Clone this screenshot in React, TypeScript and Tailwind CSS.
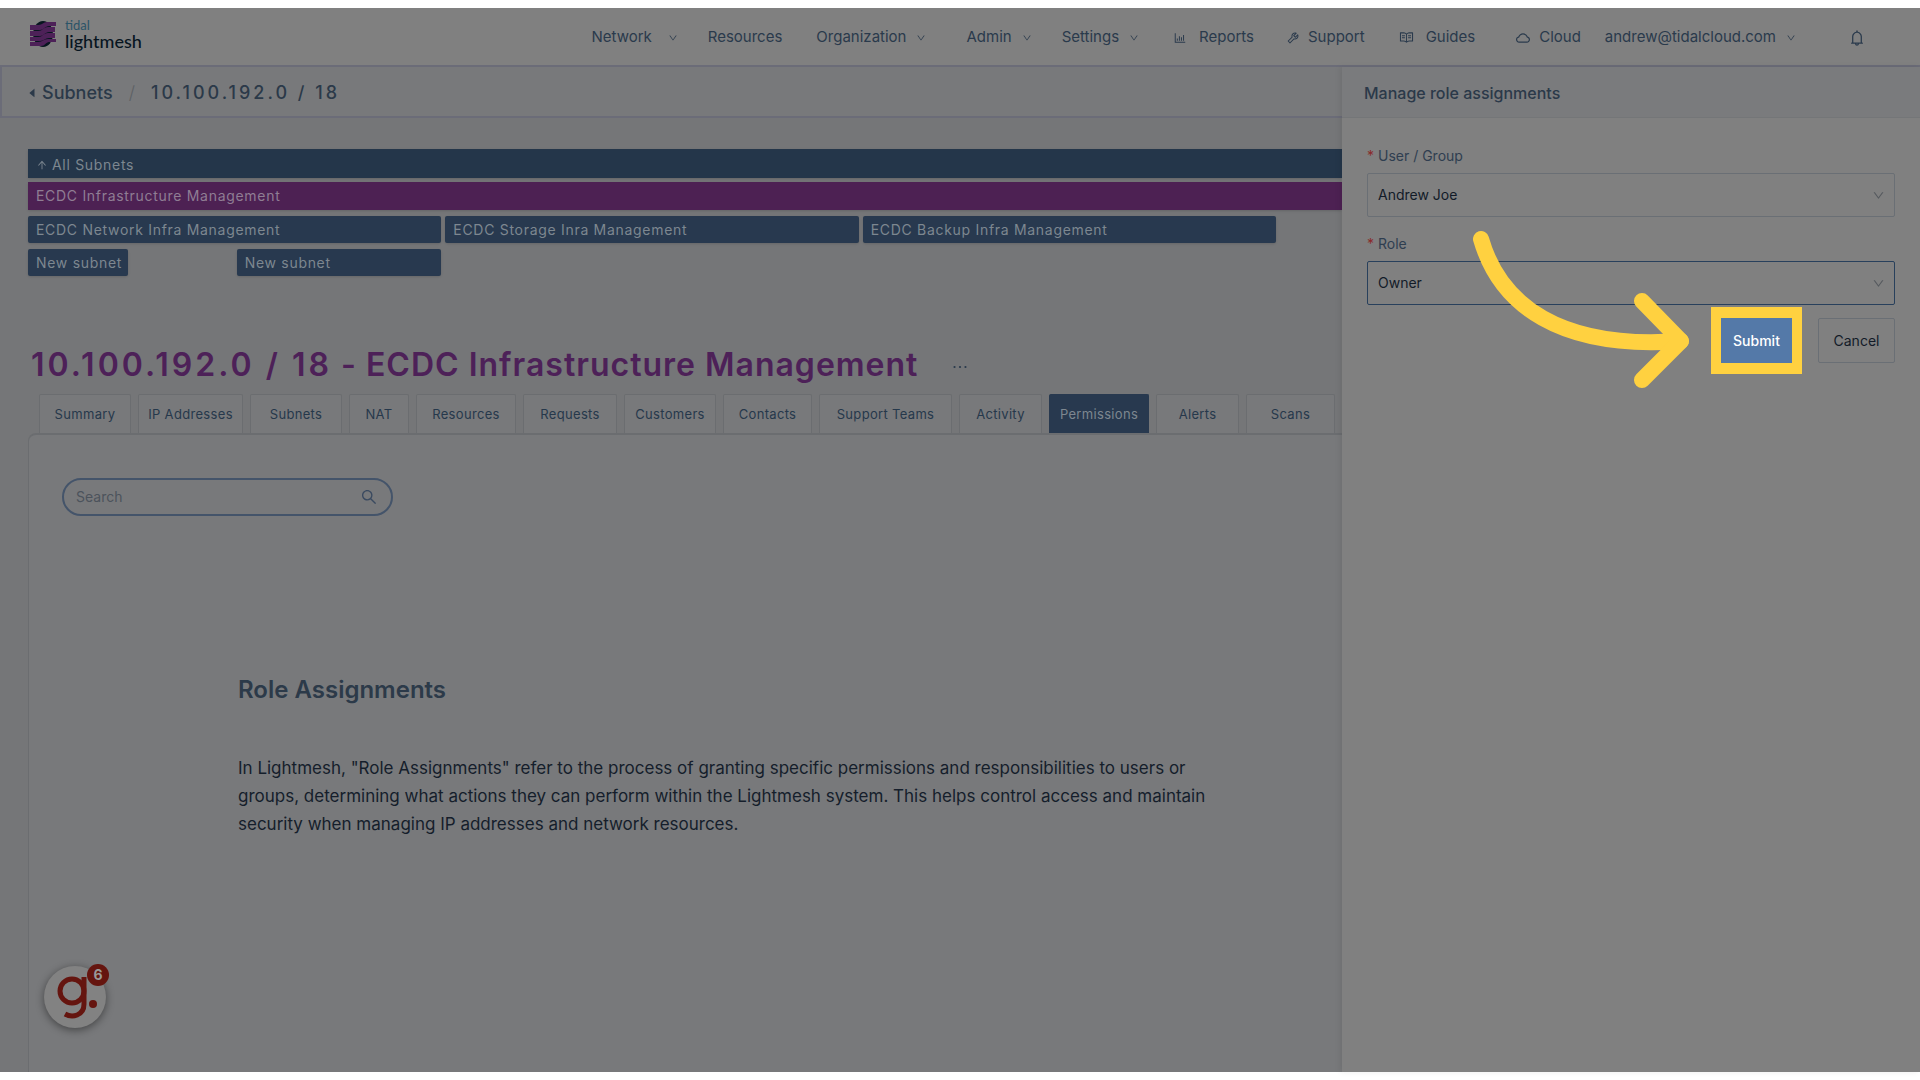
import { ReactNode } from "react";
import {
  AiFillCaretLeft,
  AiOutlineArrowUp,
  AiOutlineBarChart,
  AiOutlineBell,
  AiOutlineCloud,
  AiOutlineDown,
  AiOutlineEllipsis,
  AiOutlineRead,
  AiOutlineSearch,
  AiOutlineTool,
} from "react-icons/ai";
import clsx from "clsx";

type NavItem = {
  label: string;
  className?: string;
  icon?: ReactNode;
  arrow?: string;
};

const navItems: NavItem[] = [
  { label: "Network", arrow: "ml-4" },
  { label: "Resources", className: "ml-[30px]" },
  { label: "Organization", className: "ml-[34px]", arrow: "ml-[10px]" },
  { label: "Admin", className: "ml-10", arrow: "ml-[10px]" },
  { label: "Settings", className: "ml-[30px]", arrow: "ml-[10px]" },
  { label: "Reports", className: "ml-[34px] gap-3", icon: <AiOutlineBarChart size={14} /> },
  { label: "Support", className: "ml-8 gap-2", icon: <AiOutlineTool size={14} /> },
  { label: "Guides", className: "ml-[34px] gap-3", icon: <AiOutlineRead size={15} /> },
  { label: "Cloud", className: "ml-10 gap-2", icon: <AiOutlineCloud size={16} /> },
  { label: "andrew@tidalcloud.com", className: "ml-6", arrow: "ml-[10px]" },
];

const tabs = [
  { label: "Summary", width: "w-[92px]" },
  { label: "IP Addresses", width: "w-[105px]" },
  { label: "Subnets", width: "w-[92px]" },
  { label: "NAT", width: "w-[60px]" },
  { label: "Resources", width: "w-[100px]" },
  { label: "Requests", width: "w-[94px]" },
  { label: "Customers", width: "w-[92px]" },
  { label: "Contacts", width: "w-[89px]" },
  { label: "Support Teams", width: "w-[133px]" },
  { label: "Activity", width: "w-[83px]" },
  { label: "Permissions", width: "w-[100px]" },
  { label: "Alerts", width: "w-[83px]" },
  { label: "Scans", width: "w-[89px]" },
];

const subnets = [
  { label: "ECDC Network Infra Management", span: "col-span-4" },
  { label: "ECDC Storage Inra Management", span: "col-span-4" },
  { label: "ECDC Backup Infra Management", span: "col-span-4" },
  { label: "New subnet", span: "col-span-1" },
  { label: "New subnet", span: "col-start-3 col-span-2" },
];

function Logo() {
  return (
    <a href="#" className="flex items-center gap-2 pb-[5px]" aria-label="tidal lightmesh">
      <svg width="27" height="26" viewBox="0 0 27 26">
        <ellipse cx="13" cy="13" rx="10" ry="13" fill="#07151f" />
        <g fill="#4d2158">
          <path d="M0 4h8c5 0 5-3 9-3h9v4h-7c-4 0-5 4-9 4H0z" />
          <path d="M0 10h8c5 0 5-4 10-4h7v5h-6c-4 0-5 4-9 4H0z" />
          <path d="M0 16h8c5 0 5-4 10-4h7v5h-6c-4 0-5 3-9 3H0z" />
          <path d="M0 21h8c5 0 5-3 10-3h8v3h-7c-3 0-4 4-8 4H0z" />
        </g>
      </svg>
      <span className="flex flex-col font-['Lato']">
        <span className="text-[13px] leading-[13px] text-[#2b5468]">tidal</span>
        <span className="text-lg leading-[18px] font-medium text-[#07151f]">lightmesh</span>
      </span>
    </a>
  );
}

function Header() {
  return (
    <header className="flex h-[59px] items-center justify-between border-b-2 border-[#6b6c78] bg-[#808080] pl-[30px] pr-[54px]">
      <Logo />
      <nav className="flex items-center pt-[2px] text-[15px] text-[#2a3a4c]">
        {navItems.map((item) => (
          <a key={item.label} href="#" className={clsx("flex items-center", item.className)}>
            {item.icon}
            {item.label}
            {item.arrow && <AiOutlineDown size={10} className={item.arrow} />}
          </a>
        ))}
        <button aria-label="Notifications" className="ml-[52px]">
          <AiOutlineBell size={18} />
        </button>
      </nav>
    </header>
  );
}

function SubnetMap() {
  const bar = "flex items-center px-2 text-left text-sm tracking-wider shadow";
  return (
    <section className="mt-[31px] flex flex-col pl-7 text-[#7d8790]">
      <button className={clsx(bar, "h-[29px] bg-[#24364a] pt-[2px]")}>
        <AiOutlineArrowUp size={12} className="mr-1" />
        All Subnets
      </button>
      <button className={clsx(bar, "mt-1 h-7 bg-[#4d2153] text-[#8f7d93]")}>
        ECDC Infrastructure Management
      </button>
      <div className="mt-[6px] grid grid-cols-12 gap-x-1 gap-y-[6px] pr-[66px]">
        {subnets.map((s, i) => (
          <button
            key={i}
            className={clsx(bar, s.span, "h-[27px] rounded-xs bg-[#28394f] whitespace-nowrap")}
          >
            {s.label}
          </button>
        ))}
      </div>
    </section>
  );
}

function Tabs() {
  return (
    <div role="tablist" className="mt-[9px] flex gap-[7px] pl-[39px] text-[13px]">
      {tabs.map((tab) => (
        <button
          key={tab.label}
          role="tab"
          aria-selected={tab.label === "Permissions"}
          className={clsx(
            "h-[39px] shrink-0 rounded-t-xs border border-b-0 pt-[2px] whitespace-nowrap tracking-wide",
            tab.width,
            tab.label === "Permissions"
              ? "border-[#28394f] bg-[#28394f] text-[#7d8790]"
              : "border-[#6b6d70] bg-[#78797b] text-[#26384b]"
          )}
        >
          {tab.label}
        </button>
      ))}
    </div>
  );
}

function Permissions() {
  return (
    <section className="ml-7 grow rounded-tl-lg border-t-2 border-l border-[#6b6d70] bg-[#78797b] pt-[43px] pl-[33px]">
      <label className="flex h-[38px] w-[331px] items-center rounded-full border-2 border-[#44546a] pr-[13px] pl-3">
        <input
          type="text"
          aria-label="Search"
          placeholder="Search"
          className="grow bg-transparent text-sm outline-none placeholder:text-[#4c535c]"
        />
        <AiOutlineSearch size={18} className="text-[#3a4a60]" />
      </label>
      <div className="mt-[156px] ml-[176px] max-w-[980px]">
        <h2 className="text-2xl leading-9 font-semibold text-[#2c3a49]">Role Assignments</h2>
        <p className="mt-[46px] text-[17px] leading-7 text-[#151e2b]">
          In Lightmesh, "Role Assignments" refer to the process of granting specific permissions and
          responsibilities to users or groups, determining what actions they can perform within the
          Lightmesh system. This helps control access and maintain security when managing IP
          addresses and network resources.
        </p>
      </div>
    </section>
  );
}

function Field({ id, label, value, active }: { id: string; label: string; value: string; active?: boolean }) {
  return (
    <div className="mb-4">
      <label htmlFor={id} className="flex h-[22px] items-center gap-1 text-sm text-[#2f3e50]">
        <span className="text-[#8a2a2a]">*</span>
        {label}
      </label>
      <div className="relative mt-[6px]">
        <select
          id={id}
          className={clsx(
            "h-11 w-full appearance-none rounded-xs border px-[10px] text-sm text-[#121b28] outline-none",
            active ? "border-[#28405c]" : "border-[#6a6f75]"
          )}
        >
          <option>{value}</option>
        </select>
        <AiOutlineDown size={13} className="absolute top-4 right-[10px] text-[#55595e]" />
      </div>
    </div>
  );
}

function RoleDrawer() {
  return (
    <aside className="w-[578px] shrink-0 bg-[#808080] shadow-[-2px_0_6px_rgba(0,0,0,0.08)]">
      <h2 className="flex h-[51px] items-center border-b border-[#747678] bg-[#7a7b7d] px-[22px] pt-[2px] text-base font-medium text-[#2b3949]">
        Manage role assignments
      </h2>
      <form className="px-[25px] pt-[27px]" onSubmit={(e) => e.preventDefault()}>
        <Field id="user-group" label="User / Group" value="Andrew Joe" />
        <Field id="role" label="Role" value="Owner" active />
        <div className="-mt-[3px] flex justify-end gap-[26px] text-sm">
          <div className="relative">
            <button type="submit" className="h-[45px] w-[71px] bg-[#5479a8] font-medium text-white">
              Submit
            </button>
            <span className="pointer-events-none absolute -inset-x-[10px] -inset-y-[11px] border-x-[10px] border-y-[11px] border-[#ffd140]" />
            <svg
              className="pointer-events-none absolute -top-[88px] right-[101px]"
              width="220"
              height="160"
              fill="none"
              stroke="#ffd140"
              strokeWidth="16"
              strokeLinecap="round"
              strokeLinejoin="round"
            >
              <path d="M10 9C29 75 89 120 210 111" />
              <path d="M171 71L210 111L171 150" />
            </svg>
          </div>
          <button type="button" className="h-[45px] w-[77px] rounded-xs border border-[#6a6f75] text-[#121b28]">
            Cancel
          </button>
        </div>
      </form>
    </aside>
  );
}

function GuideWidget() {
  return (
    <button
      aria-label="Guides, 6 new"
      className="absolute bottom-[44px] left-11 size-[62px] rounded-full bg-[#828282] shadow-[0_2px_8px_rgba(0,0,0,0.45)]"
    >
      <svg width="62" height="62" viewBox="0 0 62 62" fill="none" stroke="#65150f" strokeWidth="5">
        <circle cx="28" cy="25" r="12" />
        <path d="M40 11V38C40 50 28 52 21 48" />
        <circle cx="49" cy="38" r="4" fill="#65150f" stroke="none" />
      </svg>
      <span className="absolute -top-[2px] -right-[3px] flex size-[22px] items-center justify-center rounded-full bg-[#65150f] text-sm font-bold text-[#999]">
        6
      </span>
    </button>
  );
}

export default function App() {
  return (
    <div className="flex min-h-screen flex-col bg-white py-2 font-['Inter',sans-serif]">
      <div className="relative flex grow flex-col bg-[#757678]">
        <Header />
        <div className="flex grow">
          <main className="flex min-w-0 grow flex-col overflow-hidden">
            <div className="flex h-[51px] items-center border-b-2 border-l-2 border-[#6b6c78] bg-[#78797b] pt-[2px] pl-6 text-lg font-medium text-[#2b3949]">
              <AiFillCaretLeft size={12} className="mr-1" />
              <a href="#">Subnets</a>
              <span className="mx-4 font-light text-[#5d6165]">/</span>
              <span className="tracking-[3px]">10.100.192.0 / 18</span>
            </div>
            <SubnetMap />
            <div className="mt-[69px] flex items-center pl-[31px]">
              <h1 className="text-[32px] leading-10 font-semibold tracking-[1px] whitespace-nowrap text-[#4d2158]">
                <span className="tracking-[3px]">10.100.192.0 / 18</span> - ECDC Infrastructure Management
              </h1>
              <button aria-label="More" className="ml-8 pt-1 text-[#2a3a4c]">
                <AiOutlineEllipsis size={20} />
              </button>
            </div>
            <Tabs />
            <Permissions />
          </main>
          <RoleDrawer />
        </div>
        <GuideWidget />
      </div>
    </div>
  );
}
